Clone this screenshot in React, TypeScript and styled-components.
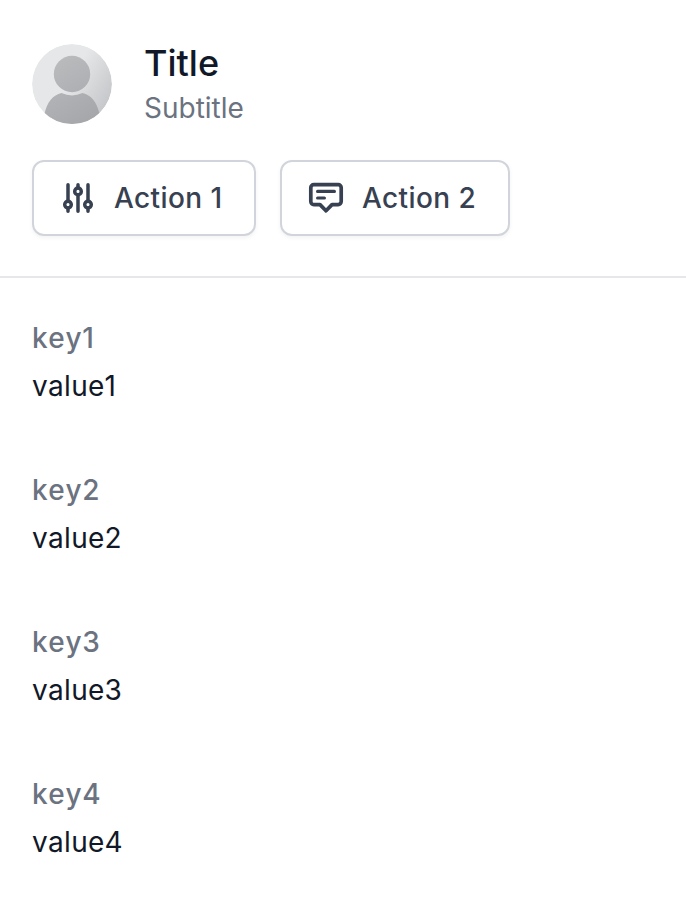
import React from "react";
import styled, { createGlobalStyle } from "styled-components";

const GlobalStyle = createGlobalStyle`
  * { box-sizing: border-box; }
  body { margin: 0; background: #fff; font-family: Inter, sans-serif; overflow: hidden; }
`;
const Panel = styled.main`
  width: 100%;
  height: 902px;
  background: #fff;
  overflow: hidden;
`;
const Header = styled.header`
  height: 278px;
  padding: 40px 32px;
  border-bottom: 2px solid #e5e7eb;
`;
const Profile = styled.div`
  display: flex;
  align-items: center;
  gap: 32px;
  height: 88px;
`;
const Avatar = styled.svg`
  width: 80px;
  height: 80px;
  flex: none;
`;
const Title = styled.h1`
  margin: 0;
  padding-bottom: 2px;
  font-size: 36px;
  line-height: 46px;
  font-weight: 500;
  color: #111827;
`;
const Subtitle = styled.p`
  margin: 0;
  font-size: 28px;
  line-height: 40px;
  color: #6b7280;
`;
const Actions = styled.div`
  display: flex;
  gap: 24px;
  margin-top: 32px;
`;
const ActionButton = styled.button<{ $width: number }>`
  display: flex;
  align-items: center;
  gap: 16px;
  width: ${(p) => p.$width}px;
  height: 76px;
  padding: 0 24px;
  border: 2px solid #d1d5db;
  border-radius: 12px;
  background: #fff;
  box-shadow: 0 2px 4px rgba(0, 0, 0, 0.05);
  color: #374151;
  font: 500 28px/40px Inter, sans-serif;
  letter-spacing: 0.4px;
  white-space: nowrap;
`;
const Icon = styled.svg`
  width: 40px;
  height: 40px;
  flex: none;
  fill: none;
  stroke: currentColor;
  stroke-width: 3.5;
  stroke-linecap: round;
  stroke-linejoin: round;
`;
const Details = styled.dl`
  display: grid;
  gap: 64px;
  margin: 0;
  padding: 40px 32px;
  font-size: 28px;
  line-height: 40px;
  font-kerning: none;
`;
const Key = styled.dt`
  font-weight: 500;
  letter-spacing: 0.7px;
  color: #6b7280;
`;
const Value = styled.dd`
  margin: 8px 0 0;
  letter-spacing: 0.3px;
  color: #111827;
`;

export default function App() {
  return (
    <Panel>
      <GlobalStyle />
      <Header>
        <Profile>
          <Avatar viewBox="0 0 80 80">
            <defs>
              <linearGradient id="disc" x1="0" y1="0.1" x2="1" y2="0.7">
                <stop offset="0.5" stopColor="#e5e7e8" />
                <stop offset="1" stopColor="#c5c6c9" />
              </linearGradient>
              <linearGradient id="person" gradientUnits="userSpaceOnUse" x1="20" y1="15" x2="62" y2="80">
                <stop offset="0" stopColor="#babcbe" />
                <stop offset="1" stopColor="#a4a5a9" />
              </linearGradient>
              <clipPath id="round"><circle cx="40" cy="40" r="40" /></clipPath>
            </defs>
            <g clipPath="url(#round)">
              <circle cx="40" cy="40" r="40" fill="url(#disc)" />
              <circle cx="40" cy="30" r="18.2" fill="url(#person)" />
              <path d="M12.5 70C15 58 21 51 29.5 49Q40 53.8 50.5 49C59 51 65 58 67.5 70V80H12.5Z" fill="url(#person)" />
            </g>
          </Avatar>
          <div>
            <Title>Title</Title>
            <Subtitle>Subtitle</Subtitle>
          </div>
        </Profile>
        <Actions>
          <ActionButton $width={224}>
            <Icon viewBox="0 0 40 40">
              <path d="M10 6.7v16.3M10 30v3.3M20 6.7v3.3M20 17v16.3M30 6.7v16.3M30 30v3.3" />
              <circle cx="10" cy="26.6" r="3.3" /><circle cx="20" cy="13.4" r="3.3" /><circle cx="30" cy="26.6" r="3.3" />
            </Icon>
            Action 1
          </ActionButton>
          <ActionButton $width={230}>
            <Icon viewBox="0 0 40 40">
              <path d="M7.8 6.7h24.4a3 3 0 0 1 3 3v13.9a3 3 0 0 1-3 3H26l-6 6.2-6-6.2H7.8a3 3 0 0 1-3-3V9.7a3 3 0 0 1 3-3Z" strokeWidth="3.7" />
              <path d="M11.6 13.4h16.8M11.6 20h6.8" strokeWidth="3.2" />
            </Icon>
            Action 2
          </ActionButton>
        </Actions>
      </Header>
      <Details>
        {[1, 2, 3, 4].map((n) => (
          <div key={n}>
            <Key>{`key${n}`}</Key>
            <Value>{`value${n}`}</Value>
          </div>
        ))}
      </Details>
    </Panel>
  );
}
